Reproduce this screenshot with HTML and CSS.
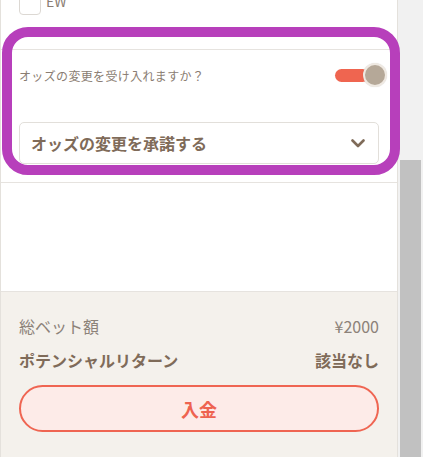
FILE: index.html
```html
<!DOCTYPE html>
<html lang="ja">
<head>
<meta charset="utf-8">
<title>Bet slip</title>
<link rel="stylesheet" href="styles.css">
</head>
<body>
<div class="page">
  <div class="panel">
    <div class="ew-row">
      <span class="checkbox"></span>
      <span class="ew-label">EW</span>
    </div>
    <section class="odds">
      <div class="question-row">
        <span class="question">オッズの変更を受け入れますか？</span>
        <span class="toggle"><span class="track"></span><span class="knob"></span></span>
      </div>
      <div class="select">
        <span class="select-text">オッズの変更を承諾する</span>
        <svg class="chevron" width="14" height="9" viewBox="0 0 14 9"><path d="M1.5 1.5 L7 7 L12.5 1.5" fill="none" stroke="#7f6b59" stroke-width="2.6" stroke-linecap="round" stroke-linejoin="round"/></svg>
      </div>
    </section>
    <section class="spacer"></section>
    <footer class="summary">
      <div class="sum-row">
        <span class="sum-label">総ベット額</span>
        <span class="sum-value">¥2000</span>
      </div>
      <div class="sum-row strong">
        <span>ポテンシャルリターン</span>
        <span>該当なし</span>
      </div>
      <button class="deposit">入金</button>
    </footer>
  </div>
  <div class="scrollbar"><div class="thumb"></div></div>
  <div class="highlight"></div>
</div>
</body>
</html>
```

FILE: styles.css
```css
html, body {
  margin: 0;
  padding: 0;
  height: 457px;
  overflow: hidden;
  background: #ffffff;
}
body {
  font-family: "Noto Sans CJK JP", "Noto Sans", sans-serif;
}
.page {
  position: relative;
  display: flex;
  height: 457px;
  width: 423px;
}
.panel {
  width: 396px;
  border-left: 1px solid #e4e1dc;
  border-right: 1px solid #e4e1dc;
  display: flex;
  flex-direction: column;
  background: #ffffff;
}
.ew-row {
  display: flex;
  align-items: flex-start;
  padding-left: 18px;
  margin-top: -7px;
  height: 56px;
  box-sizing: border-box;
}
.checkbox {
  width: 20px;
  height: 20px;
  border: 1px solid #dcd8d3;
  border-radius: 4px;
  background: #fff;
}
.ew-label {
  margin-left: 5px;
  margin-top: -2px;
  font-size: 14px;
  line-height: 20px;
  color: #8a7d72;
}
.odds {
  border-top: 1px solid #e6e3df;
  padding: 0 18px 18px 18px;
  display: flex;
  flex-direction: column;
}
.question-row {
  height: 50px;
  display: flex;
  align-items: center;
  justify-content: space-between;
  margin-right: -8px;
}
.question {
  font-size: 12px;
  letter-spacing: 0.35px;
  color: #8a7d72;
}
.toggle {
  display: flex;
  align-items: center;
}
.track {
  width: 34px;
  height: 13px;
  border-radius: 7px;
  background: #ef6550;
}
.knob {
  width: 20px;
  height: 20px;
  border-radius: 50%;
  background: #b5a898;
  border: 2px solid #efe9e2;
  margin-left: -6px;
  box-shadow: 0 0 1px rgba(0,0,0,0.15);
}
.select {
  margin-top: 22px;
  height: 42px;
  box-sizing: border-box;
  border: 1px solid #e2dfda;
  border-radius: 5px;
  display: flex;
  align-items: center;
  justify-content: space-between;
  padding: 0 13px 0 11px;
}
.select-text {
  font-size: 16px;
  font-weight: 700;
  color: #7f6b59;
}
.chevron {
  display: block;
}
.spacer {
  border-top: 1px solid #e6e3df;
  height: 108px;
}
.summary {
  flex: 1;
  border-top: 1px solid #e6e3df;
  background: #f4f1ec;
  padding: 22px 18px 0 18px;
  display: flex;
  flex-direction: column;
}
.sum-row {
  display: flex;
  justify-content: space-between;
  align-items: center;
  height: 24px;
  font-size: 16px;
  color: #8c8279;
}
.sum-row.strong {
  margin-top: 10px;
  font-weight: 700;
  color: #7f6b59;
}
.deposit {
  margin-top: 13px;
  height: 47px;
  border: 2px solid #ef6552;
  border-radius: 24px;
  background: #fdebe8;
  color: #ee6350;
  font-family: inherit;
  font-size: 18px;
  font-weight: 700;
  padding: 0;
}
.scrollbar {
  flex: 1;
  background: #f1f1f1;
  display: flex;
  flex-direction: column;
  padding-left: 2px;
  padding-right: 2px;
}
.thumb {
  margin-top: 160px;
  flex: 1;
  background: #c1c1c1;
}
.highlight {
  position: absolute;
  left: 2px;
  top: 27px;
  width: 398px;
  height: 148px;
  box-sizing: border-box;
  border: 10px solid #b73fbb;
  border-radius: 26px;
  pointer-events: none;
}
```
